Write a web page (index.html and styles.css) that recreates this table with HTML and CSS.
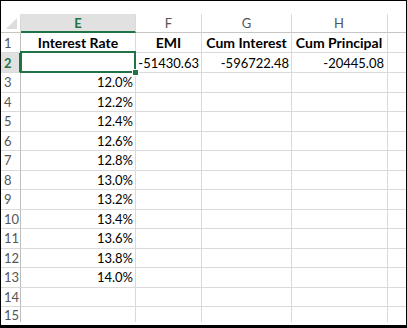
FILE: index.html
```html
<!DOCTYPE html>
<html>
<head>
<meta charset="utf-8">
<link rel="stylesheet" href="styles.css">
</head>
<body>
<div class="frame">
  <div class="sheet">
    <div class="row hdr">
      <div class="c rh corner"><span class="tri"></span></div>
      <div class="c ce ch sel">E</div>
      <div class="c cf ch">F</div>
      <div class="c cg ch">G</div>
      <div class="c chh ch">H</div>
      <div class="c ci ch"></div>
    </div>
    <div class="row r20">
      <div class="c rh">1</div>
      <div class="c ce b ctr">Interest Rate</div>
      <div class="c cf b ctr">EMI</div>
      <div class="c cg b ctr">Cum Interest</div>
      <div class="c chh b ctr">Cum Principal</div>
      <div class="c ci"></div>
    </div>
    <div class="row r20">
      <div class="c rh rsel">2</div>
      <div class="c ce active"><span class="handle"></span></div>
      <div class="c cf num">-51430.63</div>
      <div class="c cg num">-596722.48</div>
      <div class="c chh num">-20445.08</div>
      <div class="c ci"></div>
    </div>
    <div class="row"><div class="c rh">3</div><div class="c ce num">12.0%</div><div class="c cf"></div><div class="c cg"></div><div class="c chh"></div><div class="c ci"></div></div>
    <div class="row"><div class="c rh">4</div><div class="c ce num">12.2%</div><div class="c cf"></div><div class="c cg"></div><div class="c chh"></div><div class="c ci"></div></div>
    <div class="row"><div class="c rh">5</div><div class="c ce num">12.4%</div><div class="c cf"></div><div class="c cg"></div><div class="c chh"></div><div class="c ci"></div></div>
    <div class="row"><div class="c rh">6</div><div class="c ce num">12.6%</div><div class="c cf"></div><div class="c cg"></div><div class="c chh"></div><div class="c ci"></div></div>
    <div class="row"><div class="c rh">7</div><div class="c ce num">12.8%</div><div class="c cf"></div><div class="c cg"></div><div class="c chh"></div><div class="c ci"></div></div>
    <div class="row"><div class="c rh">8</div><div class="c ce num">13.0%</div><div class="c cf"></div><div class="c cg"></div><div class="c chh"></div><div class="c ci"></div></div>
    <div class="row"><div class="c rh">9</div><div class="c ce num">13.2%</div><div class="c cf"></div><div class="c cg"></div><div class="c chh"></div><div class="c ci"></div></div>
    <div class="row"><div class="c rh">10</div><div class="c ce num">13.4%</div><div class="c cf"></div><div class="c cg"></div><div class="c chh"></div><div class="c ci"></div></div>
    <div class="row"><div class="c rh">11</div><div class="c ce num">13.6%</div><div class="c cf"></div><div class="c cg"></div><div class="c chh"></div><div class="c ci"></div></div>
    <div class="row"><div class="c rh">12</div><div class="c ce num">13.8%</div><div class="c cf"></div><div class="c cg"></div><div class="c chh"></div><div class="c ci"></div></div>
    <div class="row"><div class="c rh">13</div><div class="c ce num">14.0%</div><div class="c cf"></div><div class="c cg"></div><div class="c chh"></div><div class="c ci"></div></div>
    <div class="row"><div class="c rh">14</div><div class="c ce"></div><div class="c cf"></div><div class="c cg"></div><div class="c chh"></div><div class="c ci"></div></div>
    <div class="row last"><div class="c rh">15</div><div class="c ce"></div><div class="c cf"></div><div class="c cg"></div><div class="c chh"></div><div class="c ci"></div></div>
  </div>
</div>
</body>
</html>
```

FILE: styles.css
```css
html, body {
  margin: 0;
  padding: 0;
  background: #000;
}
body {
  width: 407px;
  height: 328px;
  overflow: hidden;
}
.frame {
  margin: 1px 1px 0 1px;
  width: 405px;
  height: 324px;
  background: #fff;
  padding-top: 13px;
  box-sizing: border-box;
  overflow: hidden;
  font-family: "Lato", "Liberation Sans", sans-serif;
  font-size: 14px;
  color: #000;
}
.sheet {
  display: flex;
  flex-direction: column;
  height: 308px;
  overflow: hidden;
}
.row {
  display: flex;
  height: 19.5px;
  flex: none;
}
.row.hdr { height: 19px; }
.row.r20 { height: 20px; }
.row.last { flex: 1 1 auto; height: auto; }
.c {
  box-sizing: border-box;
  border-right: 1px solid #dadada;
  border-bottom: 1px solid #dadada;
  display: flex;
  align-items: center;
  white-space: nowrap;
  padding: 0 2px;
  position: relative;
}
.rh { width: 20px; color: #555; font-size: 13px; padding-left: 3px; border-right-color: #bdbdbd; }
.ce { width: 115px; }
.cf { width: 66px; }
.cg { width: 90px; }
.chh { width: 96px; padding-right: 3px; }
.ci { width: 18px; border-right: none; }
.hdr .c { border-bottom-color: #c6c6c6; }
.ch { justify-content: center; color: #555; font-size: 13px; }
.ch.sel { background: #e1e1e1; color: #217346; font-weight: bold; border-bottom: 2px solid #217346; }
.corner { border-right-color: #dadada; }
.tri {
  position: absolute;
  right: 3px;
  bottom: 3px;
  width: 0;
  height: 0;
  border-left: 11px solid transparent;
  border-bottom: 11px solid #dcdcdc;
}
.b { font-weight: bold; }
.ctr { justify-content: center; }
.num { justify-content: flex-end; font-size: 13px; }
.rsel { background: #e1e1e1; color: #217346; font-weight: bold; border-right: 2px solid #217346; }
.active { overflow: visible; }
.active::before {
  content: "";
  position: absolute;
  left: -1px;
  top: -2px;
  right: -1px;
  bottom: -1px;
  border: 2px solid #217346;
  pointer-events: none;
}
.handle {
  position: absolute;
  right: -4px;
  bottom: -4px;
  width: 5px;
  height: 5px;
  background: #217346;
  border: 1px solid #fff;
  z-index: 2;
}
.row.last .c { border-bottom: none; }
```
